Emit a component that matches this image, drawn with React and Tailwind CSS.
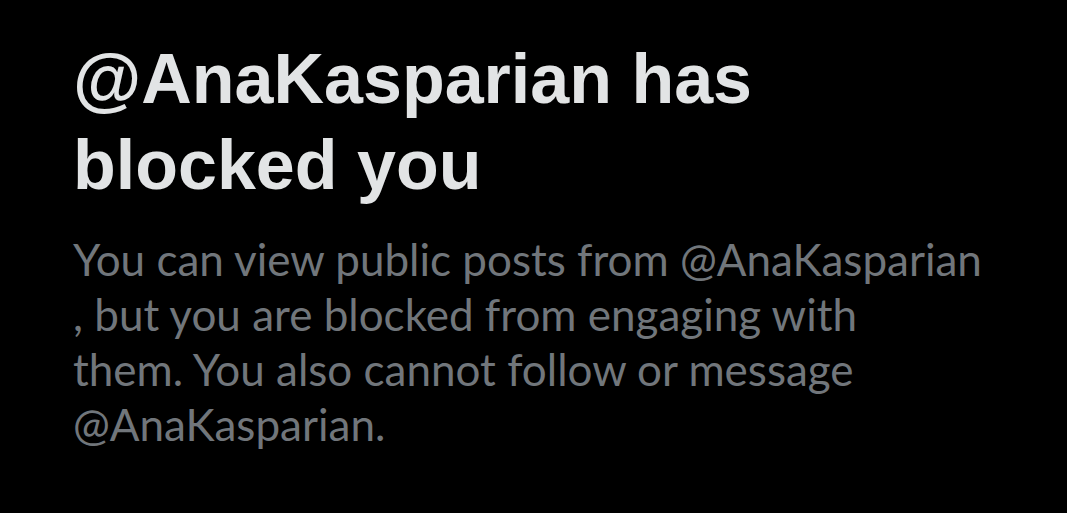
export default function App() {
  return (
    <div className="min-h-screen w-full bg-black">
      <div className="px-[73px] pt-[36px]">
        <h1 className="text-[70px] leading-[86px] font-bold text-[#e2e4e5] font-['Liberation_Sans',Arial,sans-serif]">
          @AnaKasparian has
          <br />
          blocked you
        </h1>
        <p className="mt-[24px] text-[44px] leading-[55px] text-[#71767b] font-['Lato','Noto_Sans',sans-serif]">
          You can view public posts from @AnaKasparian
          <br />
          , but you are blocked from engaging with
          <br />
          them. You also cannot follow or message
          <br />
          @AnaKasparian.
        </p>
      </div>
    </div>
  );
}
